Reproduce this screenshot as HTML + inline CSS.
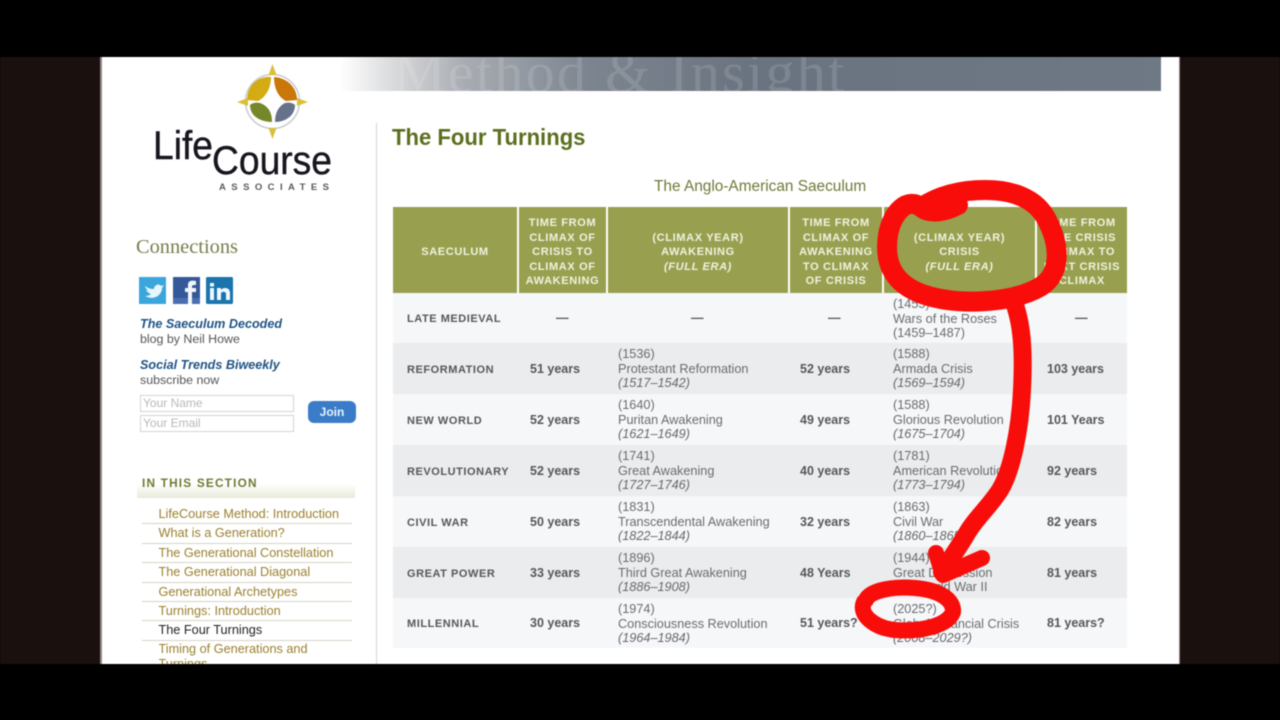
<!DOCTYPE html>
<html><head><meta charset="utf-8"><style>
html,body{margin:0;padding:0;width:1280px;height:720px;overflow:hidden;background:#000}
*{box-sizing:border-box}
body{font-family:"Liberation Sans",sans-serif;position:relative}
.a{position:absolute;white-space:nowrap}
#stage{position:absolute;left:0;top:0;width:1280px;height:720px;filter:blur(.45px)}
.side{position:absolute;top:57px;height:607px;background:#1a100d}
.row{position:absolute;left:393px;width:734px}
.l{position:absolute;left:14px;font-size:11px;font-weight:bold;letter-spacing:.55px;color:#55575a;line-height:14px;top:50%;margin-top:-6px}
.b{position:absolute;font-size:12.5px;font-weight:bold;color:#55575a;line-height:14px;top:50%;margin-top:-7px}
.t{position:absolute;font-size:12.7px;color:#6a6c70;line-height:14.6px;top:4px;white-space:nowrap}
.t i{color:#66686c}
.th{position:absolute;top:207px;height:86px;background:#98a050;color:#f0f2df;font-size:11px;font-weight:bold;letter-spacing:.65px;line-height:14.4px;text-align:center;padding-top:5px;display:flex;align-items:center;justify-content:center;white-space:nowrap}
.nav{position:absolute;left:142px;width:210px;height:19.4px;border-bottom:1px solid #d6d2c6;padding-left:16.5px;font-size:12.7px;line-height:19px;color:#9a8130;white-space:nowrap}
.inp{position:absolute;left:140px;width:154px;height:17px;border:1px solid #d5d5d5;background:#fff;font-size:12px;color:#b9b9b9;padding-left:2px;line-height:15px}
</style></head><body>
<div id="stage">
<div class="side" style="left:0;width:100px"></div>
<div class="side" style="left:1180px;width:100px"></div>
<div class="a" style="left:100px;top:57px;width:1080px;height:607px;background:#fff"></div>
<div class="a" style="left:100px;top:57px;width:1.5px;height:607px;background:#8f8a88"></div>
<div class="a" style="left:1178.5px;top:57px;width:1.5px;height:607px;background:#8f8a88"></div>

<!-- banner -->
<div class="a" style="left:340px;top:57px;width:821px;height:34px;overflow:hidden;background:linear-gradient(90deg,#fff 0,#d6d7d9 7%,#a9adb3 15%,#7d8590 30%,#6a7480 50%,#6f7986 100%)">
<div class="a" style="left:54px;top:-16px;font-family:'Liberation Serif',serif;font-size:58px;line-height:64px;color:rgba(255,255,255,.13);letter-spacing:2.3px">Method &amp; Insight</div>
</div>

<!-- logo -->
<svg class="a" style="left:140px;top:60px" width="200" height="135" viewBox="140 60 200 135">
<circle cx="272.5" cy="101.500" r="27" fill="none" stroke="#c9cbd0" stroke-width="1.5"/>
<path d="M272.5 64l4 11h-8zM272.5 139l4-11h-8zM237 102l11-4v8zM308 102l-11-4v8z" fill="#d9bf3a"/>
<path d="M271 77C257 76 247 86 247 100L258 101C266 97 271 88 271 77Z" fill="#d4ab12"/>
<path d="M274 77C288 78 297 88 297 100L286 101C278 97 274 88 274 77Z" fill="#c87708"/>
<path d="M250 105C250 116 260 122 272 122C272 112 268 106 260 103C256 102 252 103 250 105Z" fill="#74882a"/>
<path d="M295 105C295 116 285 122 275 122C275 112 279 106 285 103C289 102 293 103 295 105Z" fill="#66728a"/>
<text x="153" y="159" font-family="'Liberation Sans',sans-serif" font-size="40" fill="#16161e" stroke="#16161e" stroke-width=".4" textLength="60" lengthAdjust="spacingAndGlyphs">Life</text>
<text x="212" y="174" font-family="'Liberation Sans',sans-serif" font-size="40" fill="#16161e" stroke="#16161e" stroke-width=".4" textLength="120" lengthAdjust="spacingAndGlyphs">Course</text>
<text x="219" y="190" font-family="'Liberation Sans',sans-serif" font-size="9.5" font-weight="bold" fill="#5a5a5e" textLength="110">ASSOCIATES</text>
</svg>

<div class="a" style="left:375.5px;top:123px;width:1.5px;height:541px;background:#d4d4d4"></div>

<!-- sidebar -->
<div class="a" style="left:136px;top:236px;font-family:'Liberation Serif',serif;font-size:20.400px;line-height:22px;color:#777d4c">Connections</div>
<svg class="a" style="left:139px;top:277px" width="95" height="27" viewBox="0 0 95 27">
<rect width="27" height="27" fill="#3aa6dc"/>
<path d="M6 9c3 2 5 3 9 3c0-4 5-6 7-3l3-1l-2 3c0 7-8 13-17 8c3 0 5-1 6-2c-3-1-4-3-5-4h2c-2-1-3-3-3-4z" fill="#e8f6fc"/>
<rect x="34" width="27" height="27" fill="#34589a"/>
<path d="M34 21h27v6h-27z" fill="#4a6fae"/>
<path d="M49 27V15h-3v-4h3V8c0-4 3-5 8-4v4c-3 0-4 0-4 2v1h4v4h-4v12z" fill="#f2f5fa"/>
<rect x="67" width="27" height="27" rx="1.5" fill="#1b74ad"/>
<path d="M71 11h4v12h-4zM71 6h4v3.500h-4zM78 11h4v2c2-3 9-3 9 3v7h-4v-6c0-3-5-3-5 0v6h-4z" fill="#eef7fc"/>
</svg>
<div class="a" style="left:140px;top:317px;font-size:12.6px;line-height:14px;font-weight:bold;font-style:italic;color:#1f5384">The Saeculum Decoded</div>
<div class="a" style="left:140px;top:332px;font-size:12.4px;line-height:14px;color:#555">blog by Neil Howe</div>
<div class="a" style="left:140px;top:358px;font-size:12.6px;line-height:14px;font-weight:bold;font-style:italic;color:#1f5384">Social Trends Biweekly</div>
<div class="a" style="left:140px;top:373px;font-size:12.4px;line-height:14px;color:#555">subscribe now</div>
<div class="inp" style="top:395px">Your Name</div>
<div class="inp" style="top:415px">Your Email</div>
<div class="a" style="left:308px;top:401px;width:48px;height:22px;border-radius:6px;background:#3a7cc8;color:#eaf3fb;font-size:12px;font-weight:bold;text-align:center;line-height:22px">Join</div>
<div class="a" style="left:137px;top:472px;width:218px;height:26px;background:linear-gradient(180deg,#fff 0,#fff 45%,#e9ead9 100%)"></div>
<div class="a" style="left:142px;top:476px;font-size:11.8px;line-height:14px;font-weight:bold;letter-spacing:1.2px;color:#6f7a33">IN THIS SECTION</div>
<div class="nav" style="top:505px">LifeCourse Method: Introduction</div>
<div class="nav" style="top:524.400px">What is a Generation?</div>
<div class="nav" style="top:543.800px">The Generational Constellation</div>
<div class="nav" style="top:563.200px">The Generational Diagonal</div>
<div class="nav" style="top:582.600px">Generational Archetypes</div>
<div class="nav" style="top:602px">Turnings: Introduction</div>
<div class="nav" style="top:621.400px;color:#222">The Four Turnings</div>
<div class="a" style="left:158.500px;top:642px;width:190px;height:22px;overflow:hidden;font-size:12.7px;line-height:15px;color:#9a8130;white-space:normal">Timing of Generations and Turnings</div>

<!-- main -->
<div class="a" style="left:392px;top:122px;font-size:23.5px;line-height:30px;font-weight:bold;color:#5b6f1e;transform-origin:0 50%;transform:scaleX(.94)">The Four Turnings</div>
<div class="a" style="left:654px;top:179px;font-size:15.4px;line-height:16px;color:#6e7a3a">The Anglo-American Saeculum</div>

<div class="th" style="left:393px;width:124px"><div>SAECULUM</div></div>
<div class="th" style="left:519px;width:87px"><div>TIME FROM<br>CLIMAX OF<br>CRISIS TO<br>CLIMAX OF<br>AWAKENING</div></div>
<div class="th" style="left:608px;width:180px"><div>(CLIMAX YEAR)<br>AWAKENING<br><i>(FULL ERA)</i></div></div>
<div class="th" style="left:790px;width:92px"><div>TIME FROM<br>CLIMAX OF<br>AWAKENING<br>TO CLIMAX<br>OF CRISIS</div></div>
<div class="th" style="left:884px;width:151px"><div>(CLIMAX YEAR)<br>CRISIS<br><i>(FULL ERA)</i></div></div>
<div class="th" style="left:1037px;width:90px"><div>TIME FROM<br>THE CRISIS<br>CLIMAX TO<br>NEXT CRISIS<br>CLIMAX</div></div>

<div class="row" style="top:293px;height:50px;background:#f6f7f9"><span class="l">LATE MEDIEVAL</span><span class="b" style="left:163px">—</span><span class="b" style="left:298px">—</span><span class="b" style="left:435px">—</span><span class="t" style="left:500px">(1455)<br>Wars of the Roses<br>(1459–1487)</span><span class="b" style="left:682px">—</span></div>
<div class="row" style="top:343px;height:51px;background:#ebecee"><span class="l">REFORMATION</span><span class="b" style="left:137px">51 years</span><span class="t" style="left:225px">(1536)<br>Protestant Reformation<br><i>(1517–1542)</i></span><span class="b" style="left:407px">52 years</span><span class="t" style="left:500px">(1588)<br>Armada Crisis<br><i>(1569–1594)</i></span><span class="b" style="left:654px">103 years</span></div>
<div class="row" style="top:394px;height:51px;background:#f6f7f9"><span class="l">NEW WORLD</span><span class="b" style="left:137px">52 years</span><span class="t" style="left:225px">(1640)<br>Puritan Awakening<br><i>(1621–1649)</i></span><span class="b" style="left:407px">49 years</span><span class="t" style="left:500px">(1588)<br>Glorious Revolution<br><i>(1675–1704)</i></span><span class="b" style="left:654px">101 Years</span></div>
<div class="row" style="top:445px;height:51px;background:#ebecee"><span class="l">REVOLUTIONARY</span><span class="b" style="left:137px">52 years</span><span class="t" style="left:225px">(1741)<br>Great Awakening<br><i>(1727–1746)</i></span><span class="b" style="left:407px">40 years</span><span class="t" style="left:500px">(1781)<br>American Revolution<br><i>(1773–1794)</i></span><span class="b" style="left:654px">92 years</span></div>
<div class="row" style="top:496px;height:51px;background:#f6f7f9"><span class="l">CIVIL WAR</span><span class="b" style="left:137px">50 years</span><span class="t" style="left:225px">(1831)<br>Transcendental Awakening<br><i>(1822–1844)</i></span><span class="b" style="left:407px">32 years</span><span class="t" style="left:500px">(1863)<br>Civil War<br><i>(1860–1865)</i></span><span class="b" style="left:654px">82 years</span></div>
<div class="row" style="top:547px;height:51px;background:#ebecee"><span class="l">GREAT POWER</span><span class="b" style="left:137px">33 years</span><span class="t" style="left:225px">(1896)<br>Third Great Awakening<br><i>(1886–1908)</i></span><span class="b" style="left:407px">48 Years</span><span class="t" style="left:500px">(1944)<br>Great Depression<br>and World War II</span><span class="b" style="left:654px">81 years</span></div>
<div class="row" style="top:598px;height:50px;background:#f6f7f9"><span class="l">MILLENNIAL</span><span class="b" style="left:137px">30 years</span><span class="t" style="left:225px">(1974)<br>Consciousness Revolution<br><i>(1964–1984)</i></span><span class="b" style="left:407px">51 years?</span><span class="t" style="left:500px">(2025?)<br>Global Financial Crisis<br><i>(2008–2029?)</i></span><span class="b" style="left:654px">81 years?</span></div>

<!-- red marker -->
<svg class="a" style="left:0;top:0" width="1280" height="720" viewBox="0 0 1280 720" fill="none" stroke="#f80d0a" stroke-linecap="round" stroke-linejoin="round">
<path d="M958 205C945 212 930 214 922 208C908 196 892 212 888 235C884 262 892 284 925 295C960 306 1012 303 1040 287C1062 274 1060 245 1047 220C1036 198 1012 190 985 190C960 190 938 196 922 207" stroke-width="20"/>
<path d="M1013 300C1022 322 1024 350 1022 390C1020 430 1012 470 1000 490C990 506 974 520 966 535C958 548 950 560 942 572" stroke-width="18"/>
<path d="M936 553L943 575L982 558" stroke-width="16"/>
<path d="M866 600C870 590 895 586 915 588C940 590 954 600 953 612C948 626 920 632 895 630C875 628 858 615 864 602" stroke-width="16"/>
</svg>
</div>
</body></html>
